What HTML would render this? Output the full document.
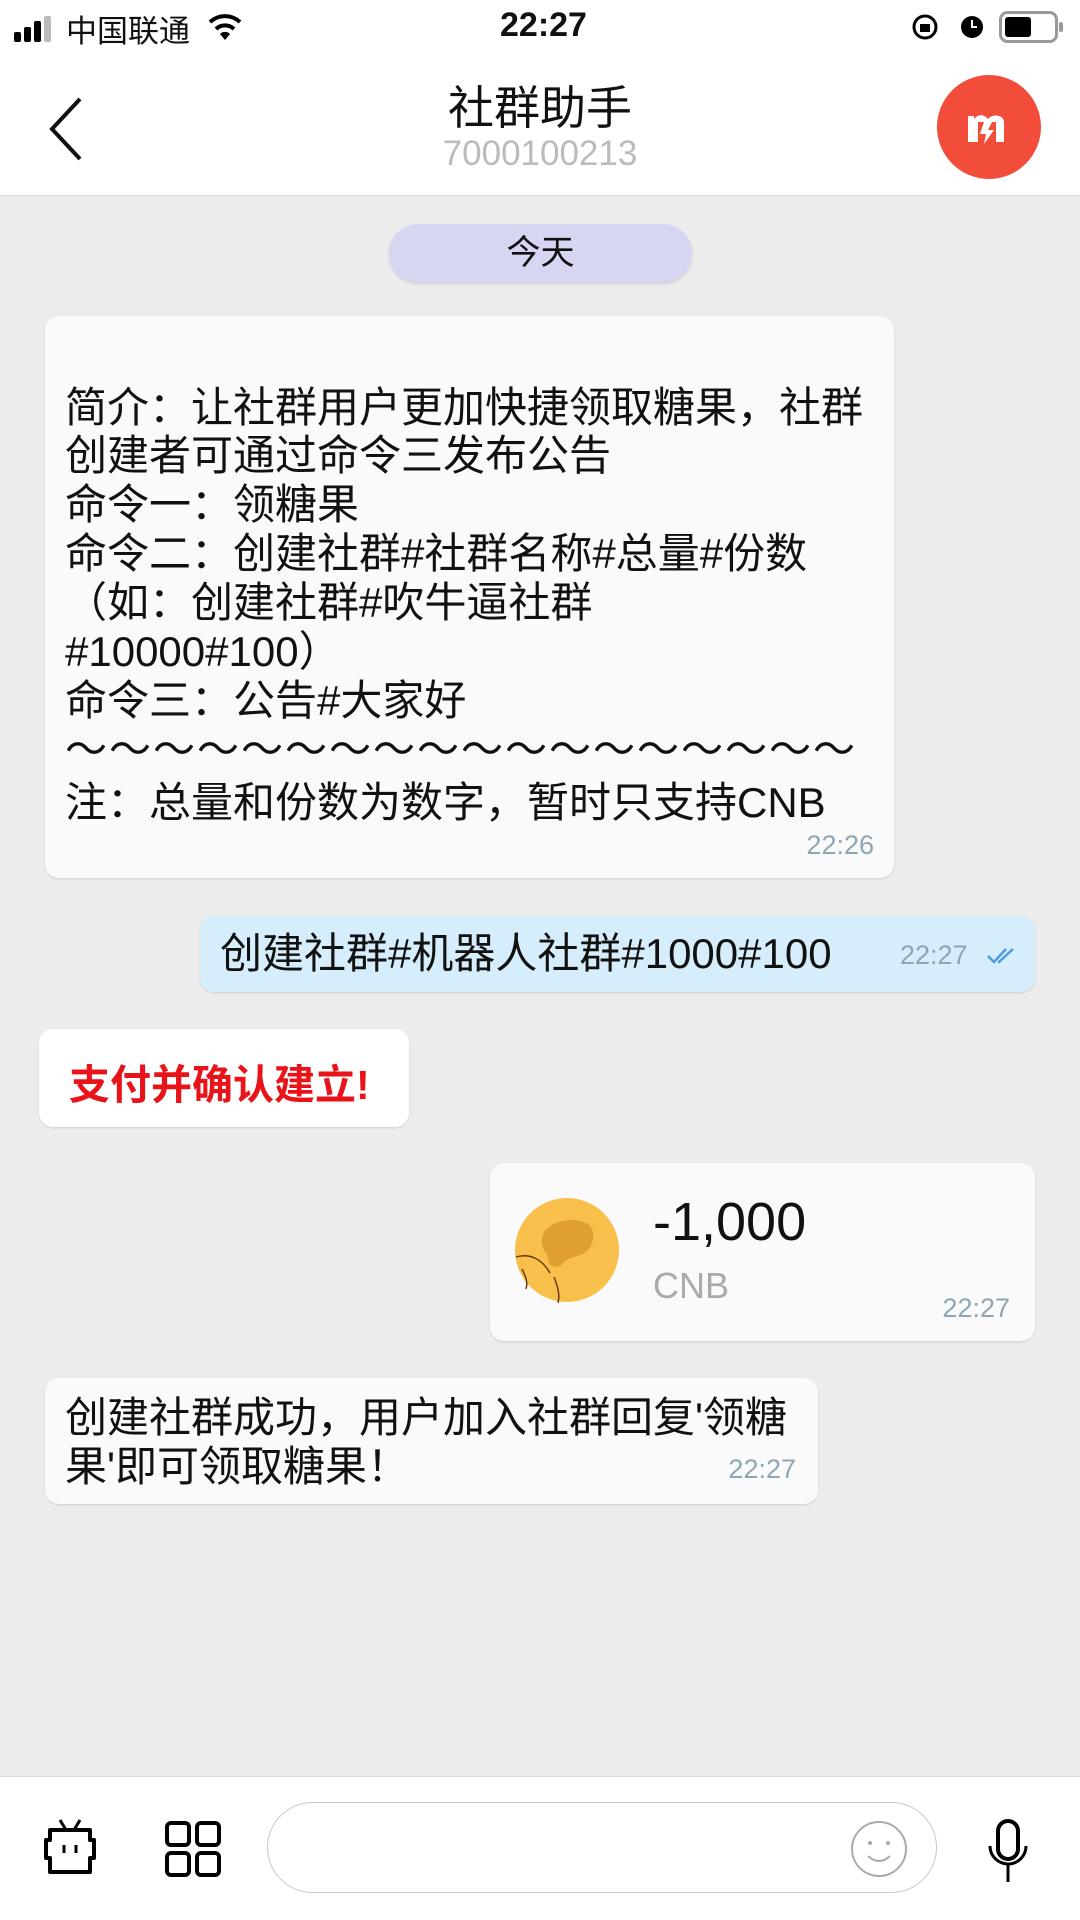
<!DOCTYPE html>
<html><head><meta charset="utf-8"><style>
*{margin:0;padding:0;box-sizing:border-box}
body{width:1080px;height:1920px;position:relative;overflow:hidden;background:#ececec;font-family:"Liberation Sans","Noto Sans CJK SC",sans-serif;color:#111}
.a{position:absolute;white-space:nowrap}
.b{position:absolute;background:#fafafa;border-radius:14px;box-shadow:0 1px 2px rgba(0,0,0,.12)}
.t{position:absolute;font-size:27px;color:#8ea5b6}
.l{position:absolute;left:20px;font-size:42px;line-height:49px;white-space:nowrap}
</style></head><body>
<div class="a" style="left:0;top:0;width:1080px;height:196px;background:#fff;border-bottom:1px solid #ddd"></div>
<!-- status -->
<svg class="a" style="left:14px;top:16px" width="44" height="26"><rect x="0" y="16" width="7" height="10" rx="2"/><rect x="10" y="11" width="7" height="15" rx="2"/><rect x="20" y="5" width="7" height="21" rx="2"/><rect x="30" y="0" width="7" height="26" rx="2" fill="#bbb"/></svg>
<div class="a" style="left:66px;top:6px;font-size:31px">中国联通</div>
<svg class="a" style="left:206px;top:12px" width="38" height="30"><path d="M4 10a22 22 0 0 1 30 0" stroke="#000" stroke-width="4" fill="none"/><path d="M10 17a13 13 0 0 1 18 0" stroke="#000" stroke-width="4" fill="none"/><path d="M14 22l5 6 5-6a7 7 0 0 0-10 0z"/></svg>
<div class="a" style="left:500px;top:6px;font-size:34px;font-weight:bold">22:27</div>
<svg class="a" style="left:910px;top:12px" width="30" height="30"><circle cx="15" cy="15" r="11" stroke="#000" stroke-width="3" fill="none"/><rect x="10" y="12" width="10" height="8" /></svg>
<svg class="a" style="left:957px;top:11px" width="30" height="30"><circle cx="15" cy="16" r="11"/><path d="M15 9v7h5" stroke="#fff" stroke-width="2" fill="none"/></svg>
<svg class="a" style="left:999px;top:11px" width="66" height="32"><rect x="1.5" y="1.5" width="56" height="29" rx="7" stroke="#999" stroke-width="3" fill="none"/><rect x="6" y="6" width="26" height="20" rx="3"/><rect x="60" y="11" width="4" height="10" rx="2" fill="#999"/></svg>
<!-- header -->
<svg class="a" style="left:46px;top:96px" width="40" height="66"><path d="M34 3L6 33l28 30" stroke="#111" stroke-width="4" fill="none"/></svg>
<div class="a" style="left:0;width:1080px;text-align:center;top:72px;font-size:46px">社群助手</div>
<div class="a" style="left:0;width:1080px;text-align:center;top:134px;font-size:35px;color:#bbb">7000100213</div>
<svg class="a" style="left:936px;top:74px" width="106" height="106"><circle cx="53" cy="53" r="52" fill="#f24d3a"/><path d="M32 68V42h6v3c4-5 10-5 14 0 4-5 14-5 16 2v21h-8V48h-4l-4 8h6l-10 14 2-10h-6l4-12h-6v20z" fill="#fff"/></svg>
<!-- today -->
<div class="a" style="left:389px;top:224px;width:303px;height:58px;border-radius:29px;background:#d6d6f3;box-shadow:0 2px 3px rgba(0,0,0,.12);text-align:center;font-size:34px;line-height:58px">今天</div>
<!-- bubble 1 -->
<div class="b" style="left:45px;top:316px;width:849px;height:562px">
<div class="l" style="top:67px">简介：让社群用户更加快捷领取糖果，社群</div>
<div class="l" style="top:115px">创建者可通过命令三发布公告</div>
<div class="l" style="top:164px">命令一：领糖果</div>
<div class="l" style="top:213px">命令二：创建社群#社群名称#总量#份数</div>
<div class="l" style="top:262px">（如：创建社群#吹牛逼社群</div>
<div class="l" style="top:311px">#10000#100）</div>
<div class="l" style="top:360px">命令三：公告#大家好</div>
<div class="l" style="top:409px;letter-spacing:2px">～～～～～～～～～～～～～～～～～～</div>
<div class="l" style="top:462px">注：总量和份数为数字，暂时只支持CNB</div>
<div class="t" style="right:20px;top:514px">22:26</div>
</div>
<!-- bubble 2 -->
<div class="b" style="left:200px;top:916px;width:835px;height:76px;background:#d6eefb">
<div class="l" style="top:13px;font-size:42px">创建社群#机器人社群#1000#100</div>
<div class="t" style="left:700px;top:24px">22:27</div>
<svg class="a" style="left:786px;top:30px" width="34" height="20"><path d="M2 10l6 6 12-13M12 16l1 0 14-13" stroke="#4a9ee0" stroke-width="2.5" fill="none"/></svg>
</div>
<!-- bubble 3 -->
<div class="b" style="left:39px;top:1029px;width:370px;height:98px;background:#fff">
<div class="a" style="left:30px;top:22px;font-size:41px;font-weight:bold;color:#e8141a">支付并确认建立!</div>
</div>
<!-- bubble 4 -->
<div class="b" style="left:490px;top:1163px;width:545px;height:178px">
<svg class="a" style="left:24px;top:34px" width="106" height="106"><circle cx="53" cy="53" r="52" fill="#f8c04a"/><path d="M30 35c10-12 30-16 44-8 8 6 6 20 0 26-8 8-20 6-26 14-4 6-16 2-14-8-6-6-8-16-4-24z" fill="#e0a030"/><path d="M2 60c14-4 26 2 34 16M8 72c4 8 6 14 4 20M40 80c4 10 6 18 4 26" stroke="#6b3a10" stroke-width="1.5" fill="none"/></svg>
<div class="a" style="left:163px;top:28px;font-size:54px">-1,000</div>
<div class="a" style="left:163px;top:102px;font-size:36px;color:#aaa">CNB</div>
<div class="t" style="right:25px;top:130px">22:27</div>
</div>
<!-- bubble 5 -->
<div class="b" style="left:45px;top:1378px;width:773px;height:126px">
<div class="l" style="top:15px">创建社群成功，用户加入社群回复'领糖</div>
<div class="l" style="top:64px">果'即可领取糖果！</div>
<div class="t" style="right:22px;top:76px">22:27</div>
</div>
<!-- bottom -->
<div class="a" style="left:0;top:1776px;width:1080px;height:144px;background:#fff;border-top:1px solid #ddd"></div>
<svg class="a" style="left:38px;top:1818px" width="66" height="60"><path d="M22 2l6 10M42 2l-6 10" stroke="#000" stroke-width="3"/><path d="M12 12h40v10h4v18h-4v14H12V40H8V22h4z" stroke="#000" stroke-width="4" fill="none" stroke-linejoin="round"/><path d="M26 27v8M38 27v8" stroke="#000" stroke-width="3"/></svg>
<svg class="a" style="left:164px;top:1820px" width="58" height="58"><rect x="3" y="3" width="22" height="22" rx="4" stroke="#000" stroke-width="4" fill="none"/><rect x="33" y="3" width="22" height="22" rx="4" stroke="#000" stroke-width="4" fill="none"/><rect x="3" y="33" width="22" height="22" rx="4" stroke="#000" stroke-width="4" fill="none"/><rect x="33" y="33" width="22" height="22" rx="4" stroke="#000" stroke-width="4" fill="none"/></svg>
<div class="a" style="left:267px;top:1802px;width:670px;height:91px;border:1.5px solid #c8c8c8;border-radius:46px"></div>
<svg class="a" style="left:850px;top:1820px" width="58" height="58"><circle cx="29" cy="29" r="27" stroke="#aaa" stroke-width="2" fill="none"/><circle cx="20" cy="23" r="2" fill="#aaa"/><circle cx="38" cy="23" r="2" fill="#aaa"/><path d="M18 36q11 10 22 0" stroke="#aaa" stroke-width="2" fill="none"/></svg>
<svg class="a" style="left:984px;top:1818px" width="48" height="70"><rect x="14" y="3" width="20" height="38" rx="10" stroke="#000" stroke-width="4" fill="none"/><path d="M6 28a18 18 0 0 0 36 0M24 46v18" stroke="#000" stroke-width="3" fill="none"/></svg>
</body></html>
